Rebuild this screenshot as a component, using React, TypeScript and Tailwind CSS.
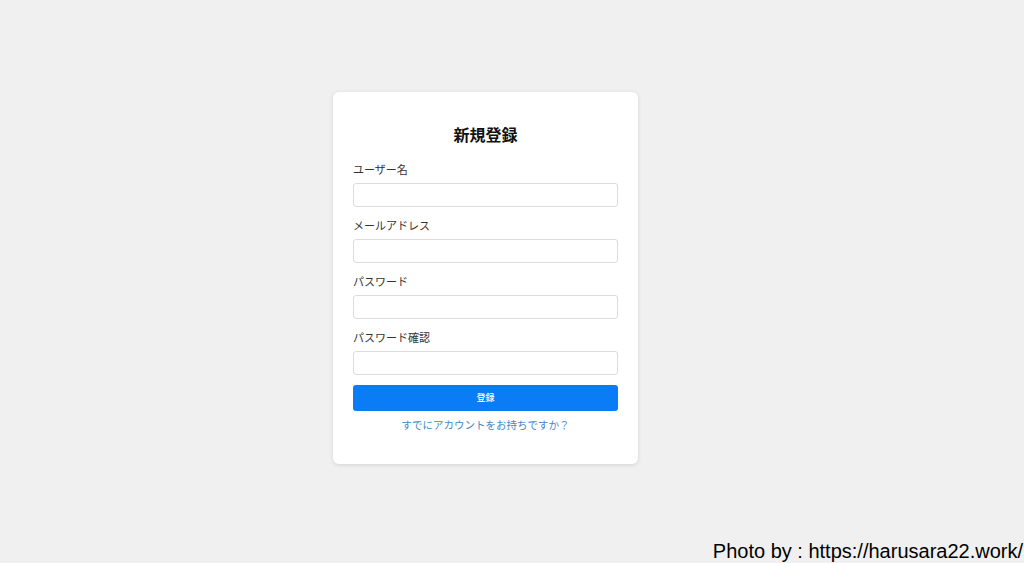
const fields = ["ユーザー名", "メールアドレス", "パスワード", "パスワード確認"];

export default function App() {
  return (
    <div
      className="relative w-[1024px] h-[563px] bg-[#f0f0f0] overflow-hidden"
      style={{ fontFamily: '"Noto Sans CJK JP", "Noto Sans", sans-serif' }}
    >
      <div className="flex pt-[92px] pl-[333px]">
        <div className="w-[305px] bg-white rounded-md shadow-[0_1px_4px_rgba(0,0,0,0.12)] px-5 pt-[31px] pb-[30px]">
          <h1 className="text-center text-[16px] leading-[22px] font-bold text-[#111]">新規登録</h1>
          <div className="mt-[15px] flex flex-col gap-[9px]">
            {fields.map((f) => (
              <div key={f} className="flex flex-col">
                <label className="text-[11px] leading-[18px] text-[#333]">{f}</label>
                <input className="mt-[5px] h-[24px] border border-[#dcdcdc] rounded-[3px] bg-white outline-none" />
              </div>
            ))}
          </div>
          <button className="mt-[10px] w-full h-[26px] bg-[#0a7cf5] rounded-[3px] text-white text-[9px] font-medium">
            登録
          </button>
          <div className="mt-[5px] text-center text-[10.5px] leading-[18px] text-[#3f88cc]">
            すでにアカウントをお持ちですか？
          </div>
        </div>
      </div>
      <div
        className="absolute right-[1px] bottom-[1px] text-[20px] leading-[22px] text-black"
        style={{ fontFamily: '"Liberation Sans", Arial, sans-serif' }}
      >
        Photo by : https://harusara22.work/
      </div>
    </div>
  );
}
